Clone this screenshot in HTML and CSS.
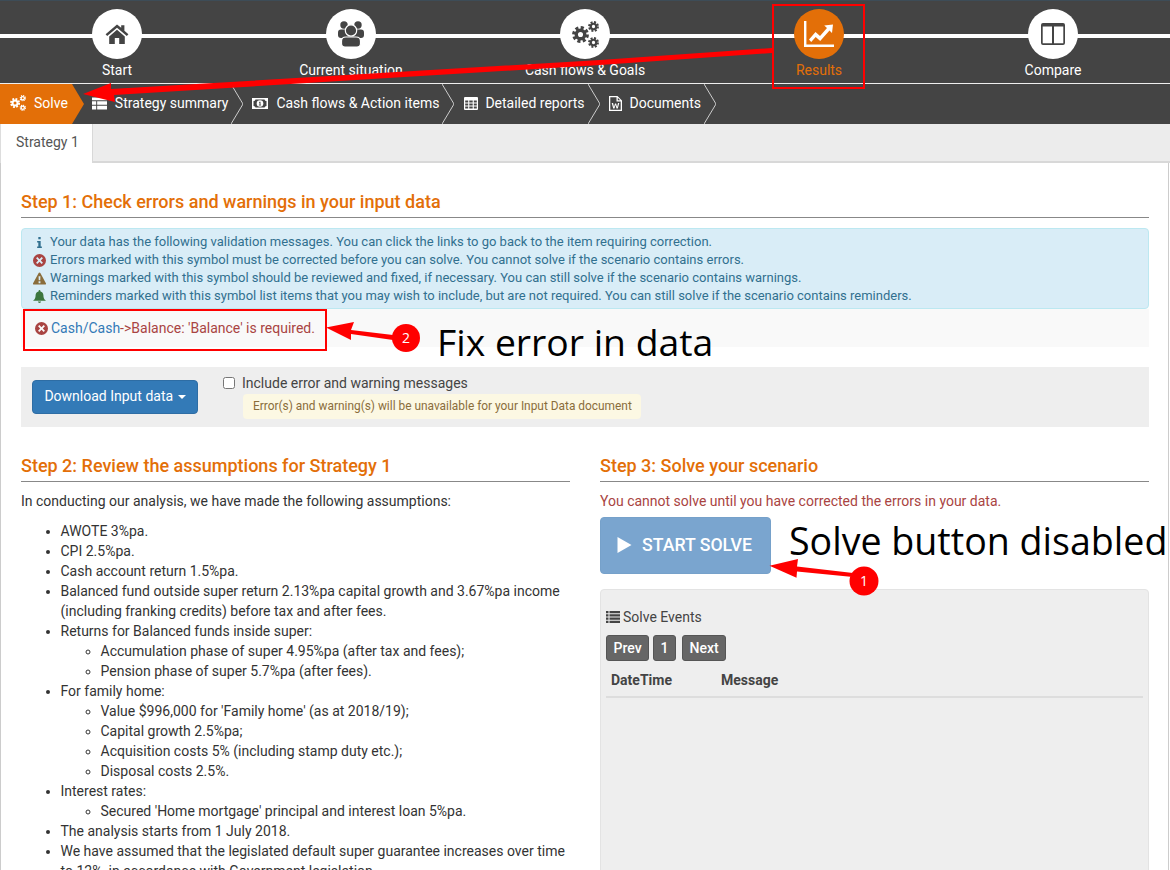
FILE: index.html
```html
<!DOCTYPE html>
<html lang="en">
<head>
  <meta charset="UTF-8">
  <title>Solve</title>
  <link rel="stylesheet" href="styles.css">
</head>
<body>
  <!-- Icon sprite -->
  <svg class="sprite">
    <symbol id="i-home" viewBox="0 0 24 24"><path d="M12 2.5 0.6 12.2l1.600 1.900L12 5.800l9.800 8.300 1.600-1.900-4-3.400V3.200h-3.200v2.600zM4.200 14.400V22h5.600v-6h4.400v6h5.600v-7.600L12 7.800z"/></symbol>
    <symbol id="i-users" viewBox="0 0 28 26">
      <circle cx="7" cy="4" r="3.700"/><circle cx="21" cy="4" r="3.700"/>
      <rect x="1" y="8.500" width="26" height="8.500" rx="3"/>
      <path class="cut" d="M4.500 20c0-2.500 2-4 4.500-4h10c2.500 0 4.500 1.500 4.500 4v2.500c0 2-1.500 3.500-3.500 3.500H8c-2 0-3.500-1.500-3.500-3.500z"/>
      <circle class="cut" cx="14" cy="9.500" r="5.700"/>
    </symbol>
    <symbol id="i-gear" viewBox="0 0 20 20"><circle cx="10" cy="10" r="5" fill="none" stroke="currentColor" stroke-width="4"/><circle cx="10" cy="10" r="8" fill="none" stroke="currentColor" stroke-width="3.800" stroke-dasharray="3.600 2.680"/></symbol>
    <symbol id="i-cogs" viewBox="0 0 27 27"><use href="#i-gear" x="0" y="5" width="17" height="17"/><use href="#i-gear" x="16" y="0" width="11" height="11"/><use href="#i-gear" x="16" y="16" width="11" height="11"/></symbol>
    <symbol id="i-chart" viewBox="0 0 30 26"><path d="M0 0h2.400v23.600H30V26H0z"/><path d="M5 18.500l6.500-7.500 4.500 4 7-8-2.800-2.600L29 3.500l-1 8.500-2.500-2.500-9.300 10.500-4.500-4-4.500 5z"/></symbol>
    <symbol id="i-columns" viewBox="0 0 24 24"><path fill-rule="evenodd" d="M2 1h20a2 2 0 0 1 2 2v18a2 2 0 0 1-2 2H2a2 2 0 0 1-2-2V3a2 2 0 0 1 2-2zM1.700 4.500v16.800H11V4.500zM13 4.500v16.800h9.300V4.500z"/></symbol>
    <symbol id="i-strategy" viewBox="0 0 16 13"><path d="M0 0h16v3H0zM0 4h4.500v3.800H0zM5.500 4H16v3.800H5.500zM0 8.800h4.500V13H0zM5.500 8.800H16V13H5.500z"/></symbol>
    <symbol id="i-money" viewBox="0 0 16 11"><path fill-rule="evenodd" d="M0 0h16v11H0zM1.500 3v5a2 2 0 0 1 2 1.500h9a2 2 0 0 1 2-1.500V3a2 2 0 0 1-2-1.500h-9a2 2 0 0 1-2 1.500z"/><circle cx="8" cy="5.500" r="3.300"/><path fill="#444" d="M7.300 3.800h1.200v2.900h.6v.8H6.900v-.8h.6V4.800l-.5.300z"/></symbol>
    <symbol id="i-table" viewBox="0 0 14 13"><path fill-rule="evenodd" d="M1 0h12a1 1 0 0 1 1 1v11a1 1 0 0 1-1 1H1a1 1 0 0 1-1-1V1a1 1 0 0 1 1-1zM1.200 3.500v2h3v-2zM5.300 3.500v2h3.400v-2zM9.800 3.500v2h3v-2zM1.200 6.500v2h3v-2zM5.300 6.500v2h3.400v-2zM9.800 6.500v2h3v-2zM1.200 9.500v2h3v-2zM5.300 9.500v2h3.400v-2zM9.800 9.500v2h3v-2z"/></symbol>
    <symbol id="i-word" viewBox="0 0 13 15"><path fill-rule="evenodd" d="M0 0h8.500L13 4.500V15H0zM1.300 1.300v12.400h10.400V5.500H7.500V1.300zM8.800 1.800v2.400h2.400z"/><path d="M2.700 7h1.400l.9 4 1-3.500h1.100l1 3.500.9-4h1.300L8.800 12.500H7.500L6.500 9l-1 3.500H4.200z"/></symbol>
    <symbol id="i-info" viewBox="0 0 8 14"><path d="M2.500 0h3v3h-3zM1 5h4.500v7H7v2H1v-2h1.500V7H1z"/></symbol>
    <symbol id="i-times" viewBox="0 0 14 14"><path fill-rule="evenodd" d="M7 0a7 7 0 1 1 0 14A7 7 0 0 1 7 0zM4.700 3.300 3.300 4.700 5.600 7 3.300 9.300l1.400 1.400L7 8.400l2.300 2.300 1.400-1.400L8.400 7l2.300-2.300-1.400-1.400L7 5.600z"/></symbol>
    <symbol id="i-warning" viewBox="0 0 14 13"><path fill-rule="evenodd" d="M7 0c.4 0 .7.200.9.500l6 11c.4.700-.1 1.500-.9 1.500H1c-.8 0-1.300-.8-.9-1.500l6-11C6.300.200 6.600 0 7 0zM6 4l.2 4.500h1.600L8 4zM6 9.500v2h2v-2z"/></symbol>
    <symbol id="i-bell" viewBox="0 0 14 14"><path d="M7 0c.6 0 1 .4 1 1v.6c2 .4 3.200 2 3.200 4 0 3 .8 4.500 2.800 6H0c2-1.500 2.800-3 2.800-6 0-2 1.200-3.600 3.200-4V1c0-.6.400-1 1-1zM5.300 12.500h3.400a1.700 1.500 0 0 1-3.400 0z"/></symbol>
    <symbol id="i-play" viewBox="0 0 14 16"><path d="M0 0l14 8-14 8z"/></symbol>
    <symbol id="i-list" viewBox="0 0 14 12"><path d="M0 0h2.500v2.200H0zM3.500 0H14v2.200H3.500zM0 3.200h2.500v2.400H0zM3.500 3.200H14v2.400H3.500zM0 6.600h2.500v2.200H0zM3.500 6.600H14v2.200H3.500zM0 9.800h2.500V12H0zM3.500 9.800H14V12H3.500z"/></symbol>
  </svg>

  <div class="page">
    <!-- Main steps -->
    <div class="steps">
      <div class="step">
        <div class="step-circle"><svg class="step-icon-home"><use href="#i-home"/></svg></div>
        <div class="step-label">Start</div>
      </div>
      <div class="step">
        <div class="step-circle"><svg class="step-icon-users"><use href="#i-users"/></svg></div>
        <div class="step-label">Current situation</div>
      </div>
      <div class="step">
        <div class="step-circle"><svg class="step-icon-cogs"><use href="#i-cogs"/></svg></div>
        <div class="step-label">Cash flows &amp; Goals</div>
      </div>
      <div class="step active">
        <div class="step-circle"><svg class="step-icon-chart"><use href="#i-chart"/></svg></div>
        <div class="step-label">Results</div>
      </div>
      <div class="step">
        <div class="step-circle"><svg class="step-icon-home"><use href="#i-columns"/></svg></div>
        <div class="step-label">Compare</div>
      </div>
    </div>

    <!-- Sub navigation -->
    <div class="subnav">
      <div class="crumb crumb-active">
        <div class="crumb-body"><svg class="crumb-icon"><use href="#i-cogs"/></svg>Solve</div>
        <svg class="chevron" viewBox="0 0 12 40"><path class="chevron-fill" d="M0 0 12 20 0 40z"/></svg>
      </div>
      <div class="crumb crumb-strategy">
        <div class="crumb-body"><svg class="crumb-icon"><use href="#i-strategy"/></svg>Strategy summary</div>
        <svg class="chevron" viewBox="0 0 12 40"><path d="M0 0 12 20 0 40"/></svg>
      </div>
      <div class="crumb">
        <div class="crumb-body"><svg class="crumb-icon icon-money"><use href="#i-money"/></svg>Cash flows &amp; Action items</div>
        <svg class="chevron" viewBox="0 0 12 40"><path d="M0 0 12 20 0 40"/></svg>
      </div>
      <div class="crumb crumb-table">
        <div class="crumb-body"><svg class="crumb-icon icon-table"><use href="#i-table"/></svg>Detailed reports</div>
        <svg class="chevron" viewBox="0 0 12 40"><path d="M0 0 12 20 0 40"/></svg>
      </div>
      <div class="crumb">
        <div class="crumb-body"><svg class="crumb-icon icon-word"><use href="#i-word"/></svg>Documents</div>
        <svg class="chevron" viewBox="0 0 12 40"><path d="M0 0 12 20 0 40"/></svg>
      </div>
    </div>

    <!-- Tabs -->
    <div class="tabs">
      <div class="tab">Strategy 1</div>
    </div>

    <div class="content">
      <h3 class="section-title">Step 1: Check errors and warnings in your input data</h3>

      <div class="alert-info">
        <div class="alert-line"><span class="alert-icon"><svg class="icon-info"><use href="#i-info"/></svg></span>Your data has the following validation messages. You can click the links to go back to the item requiring correction.</div>
        <div class="alert-line"><span class="alert-icon"><svg class="icon-status icon-error"><use href="#i-times"/></svg></span>Errors marked with this symbol must be corrected before you can solve. You cannot solve if the scenario contains errors.</div>
        <div class="alert-line"><span class="alert-icon"><svg class="icon-status icon-warning"><use href="#i-warning"/></svg></span>Warnings marked with this symbol should be reviewed and fixed, if necessary. You can still solve if the scenario contains warnings.</div>
        <div class="alert-line"><span class="alert-icon"><svg class="icon-status icon-bell"><use href="#i-bell"/></svg></span>Reminders marked with this symbol list items that you may wish to include, but are not required. You can still solve if the scenario contains reminders.</div>
      </div>

      <div class="error-row">
        <svg class="icon-status icon-error"><use href="#i-times"/></svg>
        <span><a class="link">Cash/Cash</a>-&gt;Balance: 'Balance' is required.</span>
      </div>

      <div class="download-panel">
        <button class="btn-download">Download Input data <span class="caret"></span></button>
        <div class="download-options">
          <label class="check-label"><input type="checkbox">Include error and warning messages</label>
          <div class="hint">Error(s) and warning(s) will be unavailable for your Input Data document</div>
        </div>
      </div>

      <div class="columns">
        <div class="column">
          <h3 class="section-title">Step 2: Review the assumptions for Strategy 1</h3>
          <p class="intro">In conducting our analysis, we have made the following assumptions:</p>
          <ul class="assumptions">
            <li>AWOTE 3%pa.</li>
            <li>CPI 2.5%pa.</li>
            <li>Cash account return 1.5%pa.</li>
            <li>Balanced fund outside super return 2.13%pa capital growth and 3.67%pa income (including franking credits) before tax and after fees.</li>
            <li>Returns for Balanced funds inside super:
              <ul>
                <li>Accumulation phase of super 4.95%pa (after tax and fees);</li>
                <li>Pension phase of super 5.7%pa (after fees).</li>
              </ul>
            </li>
            <li>For family home:
              <ul>
                <li>Value $996,000 for 'Family home' (as at 2018/19);</li>
                <li>Capital growth 2.5%pa;</li>
                <li>Acquisition costs 5% (including stamp duty etc.);</li>
                <li>Disposal costs 2.5%.</li>
              </ul>
            </li>
            <li>Interest rates:
              <ul>
                <li>Secured 'Home mortgage' principal and interest loan 5%pa.</li>
              </ul>
            </li>
            <li>The analysis starts from 1 July 2018.</li>
            <li>We have assumed that the legislated default super guarantee increases over time to 12%, in accordance with Government legislation.</li>
          </ul>
        </div>

        <div class="column">
          <h3 class="section-title">Step 3: Solve your scenario</h3>
          <p class="intro text-danger">You cannot solve until you have corrected the errors in your data.</p>
          <button class="btn-solve"><svg class="icon-play"><use href="#i-play"/></svg>START SOLVE</button>
          <div class="events-panel">
            <div class="events-title"><svg class="icon-list"><use href="#i-list"/></svg>Solve Events</div>
            <div class="pager">
              <button class="pager-btn">Prev</button>
              <button class="pager-btn">1</button>
              <button class="pager-btn pager-next">Next</button>
            </div>
            <div class="events-head">
              <div class="events-date">DateTime</div>
              <div>Message</div>
            </div>
          </div>
        </div>
      </div>
    </div>

    <!-- Screenshot annotations -->
    <div class="mark mark-results"></div>
    <div class="mark mark-error"></div>
    <svg class="arrows" viewBox="0 0 1170 870">
      <path d="M772 48 600 60 111 89 111 83 83 94 115 102 114 95 600 65 772 53z"/>
      <path d="M393 335 351 330 354 322 326 327.500 351 340 351 334 393 340z"/>
      <path d="M853 573 797 566.500 798 559 769.500 565.700 796.500 577.700 797 571.500 853 577z"/>
      <circle cx="406" cy="338" r="14"/>
      <circle cx="864" cy="581" r="14.500"/>
    </svg>
    <div class="callout-num num-two">2</div>
    <div class="callout-num num-one">1</div>
    <div class="callout callout-fix">Fix error in data</div>
    <div class="callout callout-solve">Solve button disabled</div>
  </div>
</body>
</html>
```

FILE: styles.css
```css
* {
  box-sizing: border-box;
}

body {
  margin: 0;
  font-family: Roboto, "Liberation Sans", sans-serif;
  font-size: 14px;
  line-height: 20px;
  color: #333;
  background-color: white;
}

.sprite {
  display: none;
}

svg {
  fill: currentColor;
}

.cut {
  stroke: white;
  stroke-width: 1.200;
}

.page {
  position: relative;
  height: 870px;
  overflow: hidden;
}

/* Main steps */
.steps {
  display: flex;
  height: 84px;
  padding-top: 9px;
  border-top: 1px solid #3d4c57;
  border-bottom: 1px solid #eee;
  background: linear-gradient(white, white) 0 33px / 100% 4px no-repeat, #444;
}

.step {
  flex: 1;
  display: flex;
  flex-direction: column;
  align-items: center;
  color: white;
}

.step-circle {
  width: 50px;
  height: 50px;
  margin-top: -1px;
  border-radius: 50%;
  background-color: white;
  color: #444;
  display: flex;
  align-items: center;
  justify-content: center;
}

.step-icon-home {
  width: 24px;
  height: 24px;
}

.step-icon-users {
  width: 28px;
  height: 26px;
}

.step-icon-cogs {
  width: 27px;
  height: 27px;
}

.step-icon-chart {
  width: 30px;
  height: 26px;
}

.step-label {
  margin-top: 1px;
}

.step.active .step-circle {
  background-color: #e36f08;
  color: white;
}

.step.active .step-label {
  color: #e36f08;
}

/* Sub navigation */
.subnav {
  display: flex;
  height: 40px;
  background-color: #444;
  color: white;
}

.crumb {
  display: flex;
}

.crumb-body {
  display: flex;
  align-items: center;
  gap: 8px;
  padding: 0 3px 2px 9px;
}

.crumb-strategy .crumb-body {
  padding-left: 8px;
}

.crumb-table .crumb-body {
  padding-left: 10px;
  gap: 7px;
}

.crumb-icon {
  width: 15px;
  height: 13px;
  flex-shrink: 0;
}

.icon-money {
  width: 16px;
  height: 11px;
}

.icon-table {
  width: 14px;
}

.icon-word {
  width: 13px;
  height: 15px;
}

.crumb-active .crumb-body {
  background-color: #e36f08;
  padding: 0 4px 2px 10px;
  gap: 8px;
}

.crumb-active .crumb-icon {
  width: 16px;
  height: 16px;
}

.chevron {
  width: 12px;
  height: 40px;
  fill: none;
  stroke: #ccc;
  stroke-width: 1;
}

.chevron .chevron-fill {
  fill: #e36f08;
  stroke: none;
}

/* Tabs */
.tabs {
  height: 39px;
  background-color: #ececec;
  border-bottom: 2px solid #d8d8d8;
}

.tab {
  width: 93px;
  height: 39px;
  padding-left: 15px;
  line-height: 36px;
  background-color: white;
  border-right: 1px solid #d8d8d8;
  border-left: 1px solid #ddd;
  color: #555;
}

/* Content */
.content {
  padding: 29px 19px 0 20px;
  margin-right: 1px;
  border-left: 1px solid #ccc;
  border-right: 1px solid #ccc;
  height: 707px;
}

.section-title {
  margin: 0;
  padding-bottom: 5px;
  font-size: 18px;
  font-weight: 500;
  line-height: 20px;
  color: #e36f08;
  border-bottom: 1px solid #888;
}

.alert-info {
  margin-top: 10px;
  padding: 4px 11px 3px;
  font-size: 13px;
  line-height: 18px;
  color: #31708f;
  background-color: #d9edf7;
  border: 1px solid #bce8f1;
  border-radius: 4px;
}

.alert-line {
  display: flex;
  align-items: center;
}

.alert-icon {
  width: 13px;
  margin-right: 4px;
  display: flex;
  justify-content: center;
  flex-shrink: 0;
}

.icon-info {
  width: 7px;
  height: 11px;
  color: #31708f;
}

.icon-status {
  width: 13px;
  height: 13px;
  flex-shrink: 0;
}

.icon-error {
  color: #a94442;
}

.icon-warning {
  color: #8a6d3b;
}

.icon-bell {
  color: #3c763d;
}

.error-row {
  display: flex;
  align-items: center;
  gap: 3px;
  height: 38px;
  padding-left: 14px;
  color: #a94442;
  background-color: #f9f9f9;
}

.link {
  color: #337ab7;
}

.download-panel {
  display: flex;
  height: 60px;
  margin-top: 20px;
  padding: 13px 11px;
  background-color: #eee;
}

.btn-download {
  width: 166px;
  height: 34px;
  padding-bottom: 3px;
  font-family: inherit;
  font-size: 14px;
  color: white;
  background-color: #337ab7;
  border: 1px solid #2e6da4;
  border-radius: 4px;
}

.caret {
  display: inline-block;
  margin-left: 1px;
  vertical-align: middle;
  border-top: 4px solid white;
  border-right: 4px solid transparent;
  border-left: 4px solid transparent;
}

.download-options {
  margin-left: 25px;
  margin-top: -7px;
}

.check-label {
  display: flex;
  align-items: center;
  gap: 7px;
  color: #444;
}

.check-label input {
  width: 12px;
  height: 12px;
  margin: 0;
}

.hint {
  margin: 1px 0 0 20px;
  padding: 2px 10px;
  height: 25px;
  width: 398px;
  font-size: 11.900px;
  line-height: 20px;
  color: #8a6d3b;
  background-color: #fcf8e3;
  border-radius: 4px;
  white-space: nowrap;
}

.columns {
  display: flex;
  gap: 30px;
  margin-top: 29px;
}

.column {
  flex: 1;
  min-width: 0;
}

.intro {
  margin: 9px 0 0;
}

.text-danger {
  color: #a94442;
}

.assumptions {
  margin: 10px 0 0;
  padding-left: 39.500px;
}

.assumptions ul {
  padding-left: 40px;
}

/* Solve column */
.btn-solve {
  display: flex;
  align-items: center;
  gap: 10px;
  width: 171px;
  height: 57px;
  margin-top: 6px;
  padding: 0 0 2px 16px;
  font-family: inherit;
  font-size: 17.700px;
  font-weight: 500;
  color: white;
  background-color: #7aa5cf;
  border: 1px solid #76a1ca;
  border-radius: 4px;
}

.icon-play {
  width: 15px;
  height: 16px;
}

.events-panel {
  height: 300px;
  margin-top: 15px;
  padding: 17px 5px 0;
  background-color: #eee;
  border: 1px solid #e3e3e3;
  border-radius: 4px;
}

.events-title {
  display: flex;
  align-items: center;
  gap: 3px;
  color: #444;
}

.icon-list {
  width: 14px;
  height: 12px;
}

.pager {
  display: flex;
  gap: 4px;
  margin-top: 8px;
}

.pager-btn {
  height: 26px;
  padding: 0 6.500px;
  font-family: inherit;
  font-size: 14px;
  font-weight: 500;
  color: white;
  background-color: #666;
  border: 1px solid #555;
  border-radius: 3px;
}

.pager-next {
  margin-left: 2px;
}

.events-head {
  display: flex;
  margin-top: 9px;
  padding: 0 5px 6px;
  font-weight: 700;
  color: #444;
  border-bottom: 2px solid #ddd;
}

.events-date {
  width: 110px;
}

/* Annotations */
.mark {
  position: absolute;
  border: 2px solid #f00;
}

.mark-results {
  left: 772px;
  top: 4px;
  width: 93px;
  height: 85px;
}

.mark-error {
  left: 23px;
  top: 309px;
  width: 304px;
  height: 42px;
}

.arrows {
  position: absolute;
  left: 0;
  top: 0;
  width: 1170px;
  height: 870px;
  fill: #f00;
}

.callout-num {
  position: absolute;
  width: 20px;
  text-align: center;
  font-family: "Open Sans", sans-serif;
  color: white;
}

.num-two {
  left: 396px;
  top: 328px;
}

.num-one {
  left: 854px;
  top: 571px;
}

.callout {
  position: absolute;
  font-family: "Open Sans", "Noto Sans", sans-serif;
  font-size: 37.600px;
  line-height: 44px;
  color: black;
  white-space: nowrap;
}

.callout-fix {
  left: 437px;
  top: 320px;
  font-size: 37.300px;
}

.callout-solve {
  left: 789px;
  top: 519px;
}
```
